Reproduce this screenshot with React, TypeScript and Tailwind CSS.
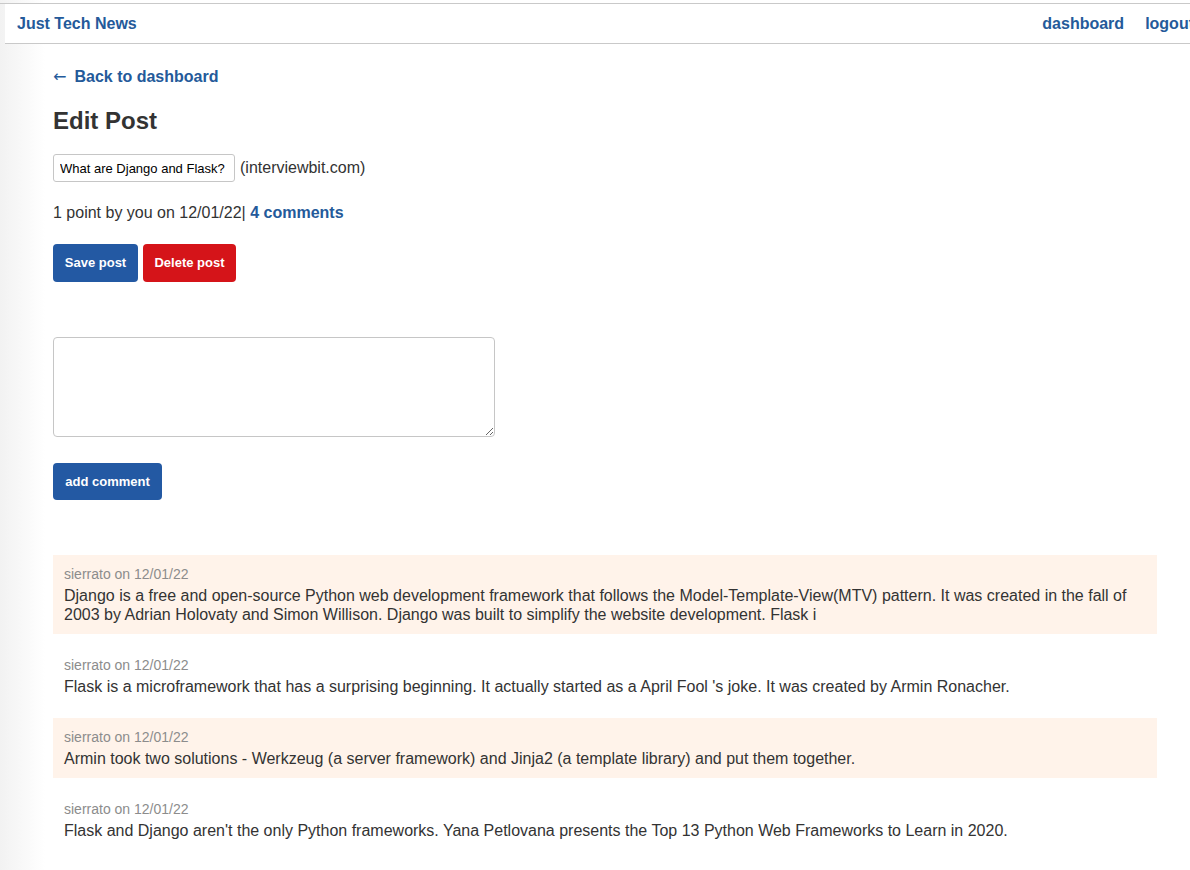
const comments = [
  {
    user: "sierrato",
    date: "12/01/22",
    text: "Django is a free and open-source Python web development framework that follows the Model-Template-View(MTV) pattern. It was created in the fall of 2003 by Adrian Holovaty and Simon Willison. Django was built to simplify the website development. Flask i",
  },
  {
    user: "sierrato",
    date: "12/01/22",
    text: "Flask is a microframework that has a surprising beginning. It actually started as a April Fool 's joke. It was created by Armin Ronacher.",
  },
  {
    user: "sierrato",
    date: "12/01/22",
    text: "Armin took two solutions - Werkzeug (a server framework) and Jinja2 (a template library) and put them together.",
  },
  {
    user: "sierrato",
    date: "12/01/22",
    text: "Flask and Django aren't the only Python frameworks. Yana Petlovana presents the Top 13 Python Web Frameworks to Learn in 2020.",
  },
];

export default function App() {
  return (
    <div className="min-h-[870px] overflow-hidden bg-[linear-gradient(to_right,#f2f2f2,#ffffff_45px)] pt-[3px] font-['Liberation_Sans',Arial,sans-serif] text-[#333]">
      <div className="border-t border-[#c9c9c9]">
        <header className="ml-[5px] flex h-[40px] items-center justify-between border-b border-[#c9c9c9] bg-white pl-3">
          <a href="#" className="text-base font-bold text-[#245a9a]">
            Just Tech News
          </a>
          <nav className="mr-[-4px] flex gap-[21px] text-base font-bold text-[#245a9a]">
            <a href="#">dashboard</a>
            <a href="#">logout</a>
          </nav>
        </header>
      </div>

      <main className="px-[53px] pt-[21px]">
        <a href="#" className="text-base font-bold text-[#245a9a]">
          <span className="inline-block w-[17px] font-['DejaVu_Sans',sans-serif] font-normal">←</span> Back to dashboard
        </a>
        <h2 className="mt-[18px] text-2xl leading-7 font-bold text-[#333]">Edit Post</h2>

        <div className="mt-[19px] flex items-center gap-[5px]">
          <input
            defaultValue="What are Django and Flask?"
            className="h-[28px] w-[182px] rounded-[3px] border border-[#c6c6c6] bg-white px-[6px] text-[13px] text-black outline-none"
          />
          <span className="text-base">(interviewbit.com)</span>
        </div>

        <p className="mt-[19px] text-base">
          1 point by you on 12/01/22|{" "}
          <a href="#" className="font-bold text-[#245a9a]">
            4 comments
          </a>
        </p>

        <div className="mt-[19px] flex gap-[5px]">
          <button className="h-[38px] w-[85px] rounded-[4px] bg-[#2359a3] text-[13px] font-bold text-white">
            Save post
          </button>
          <button className="h-[38px] w-[93px] rounded-[4px] bg-[#d51419] text-[13px] font-bold text-white">
            Delete post
          </button>
        </div>

        <textarea className="mt-[55px] block h-[100px] w-[442px] rounded-[4px] border border-[#c6c6c6] bg-white p-2 text-sm outline-none" />

        <button className="mt-[26px] block h-[37px] w-[109px] rounded-[4px] bg-[#2359a3] text-[13px] font-bold text-white">
          add comment
        </button>

        <div className="mt-[55px] flex w-[1104px] flex-col gap-[12px]">
          {comments.map((c, i) => (
            <div
              key={i}
              className={`flex flex-col gap-[3px] px-[11px] py-[10px] ${i % 2 === 0 ? "bg-[#fff3ea]" : ""}`}
            >
              <div className="text-sm leading-[18px] text-[#8c8c8c]">
                {c.user} on {c.date}
              </div>
              <p className="text-base leading-[19px] text-[#333]">{c.text}</p>
            </div>
          ))}
        </div>
      </main>
    </div>
  );
}
